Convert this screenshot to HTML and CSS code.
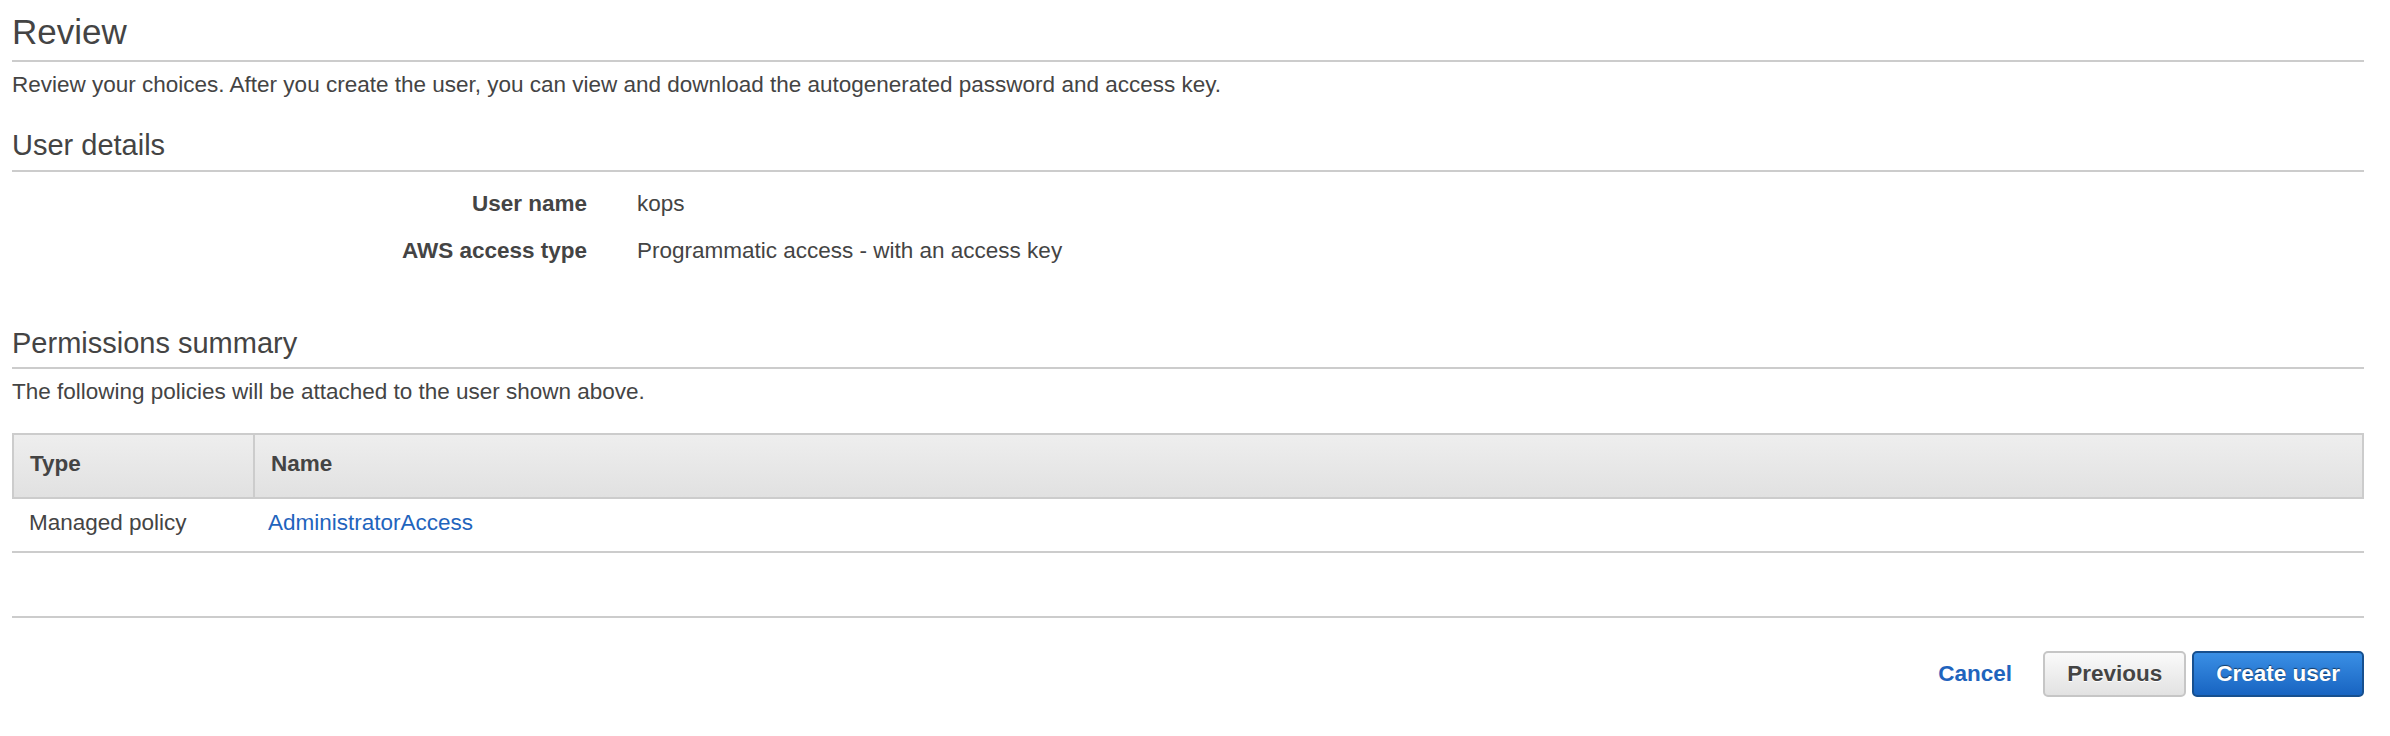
FILE: index.html
```html
<!DOCTYPE html>
<html lang="en">
<head>
<meta charset="utf-8">
<title>Review</title>
<link rel="stylesheet" href="styles.css">
</head>
<body>
<div class="page">
  <h1 class="title">Review</h1>
  <p class="desc">Review your choices. After you create the user, you can view and download the autogenerated password and access key.</p>

  <h2 class="section">User details</h2>
  <dl class="details">
    <dt>User name</dt><dd>kops</dd>
    <dt>AWS access type</dt><dd>Programmatic access - with an access key</dd>
  </dl>

  <h2 class="section perms">Permissions summary</h2>
  <p class="desc">The following policies will be attached to the user shown above.</p>

  <table class="policies">
    <thead>
      <tr><th class="col-type">Type</th><th class="col-name">Name</th></tr>
    </thead>
    <tbody>
      <tr><td class="col-type">Managed policy</td><td class="col-name"><a class="link" href="#">AdministratorAccess</a></td></tr>
    </tbody>
  </table>

  <div class="footer">
    <a class="cancel" href="#">Cancel</a>
    <button class="btn btn-secondary" type="button">Previous</button>
    <button class="btn btn-primary" type="button">Create user</button>
  </div>
</div>
</body>
</html>
```
FILE: styles.css
```css
html, body {
  margin: 0;
  padding: 0;
  background: #fff;
}

body {
  font-family: "Liberation Sans", Arial, Helvetica, sans-serif;
  color: #444;
  font-size: 22.5px;
  line-height: 30px;
}

.page {
  padding: 12px 26px 0 12px;
}

.title {
  margin: 0;
  font-size: 35px;
  line-height: 40px;
  font-weight: normal;
  color: #444;
  padding-bottom: 8px;
  border-bottom: 2px solid #cccccc;
}

.desc {
  margin: 8px 0 0;
  font-size: 22.5px;
  line-height: 30px;
}

.section {
  margin: 28px 0 0;
  font-size: 29px;
  line-height: 34px;
  font-weight: normal;
  color: #444;
  padding-bottom: 8px;
  border-bottom: 2px solid #cccccc;
}

.section.perms {
  margin-top: 60px;
  padding-bottom: 7px;
}

.details {
  display: grid;
  grid-template-columns: 575px 1fr;
  column-gap: 50px;
  row-gap: 17px;
  margin: 17px 0 0;
}

.details dt {
  font-weight: bold;
  text-align: right;
}

.details dd {
  margin: 0;
}

.policies {
  width: 100%;
  margin-top: 26px;
  border-collapse: separate;
  border-spacing: 0;
  table-layout: fixed;
}

.policies th {
  text-align: left;
  font-weight: bold;
  color: #444;
  background: linear-gradient(#eeeeee, #e1e1e1);
  border-top: 2px solid #cccccc;
  border-bottom: 2px solid #cccccc;
  padding: 14px 16px 18px;
}

.policies th.col-type {
  box-sizing: border-box;
  width: 243px;
  border-left: 2px solid #cccccc;
  border-right: 2px solid #cccccc;
}

.policies th.col-name {
  border-right: 2px solid #cccccc;
}

.policies td {
  padding: 9px 16px 13px;
  border-bottom: 2px solid #cccccc;
}

.policies td.col-type {
  padding-left: 17px;
}

.policies td.col-name {
  padding-left: 13px;
}

.link {
  color: #1f64bd;
  text-decoration: none;
}

.footer {
  margin-top: 63px;
  border-top: 2px solid #cccccc;
  padding-top: 33px;
  display: flex;
  justify-content: flex-end;
  align-items: center;
}

.cancel {
  color: #1f64bd;
  font-weight: bold;
  text-decoration: none;
  margin-right: 31px;
}

.btn {
  height: 46px;
  padding: 0 22px;
  border-radius: 5px;
  font-family: "Liberation Sans", Arial, Helvetica, sans-serif;
  font-size: 22.5px;
  line-height: 30px;
  font-weight: bold;
  cursor: pointer;
}

.btn-secondary {
  color: #444;
  background: linear-gradient(#fafafa, #e2e2e2);
  border: 2px solid #c6c6c6;
  text-shadow: 0 1px 0 #fff;
  margin-right: 6px;
}

.btn-primary {
  color: #fff;
  background: linear-gradient(#3a8fe5, #1864c1);
  border: 2px solid #17508f;
  text-shadow: 0 -1px 1px rgba(0, 0, 0, 0.55);
}
```
